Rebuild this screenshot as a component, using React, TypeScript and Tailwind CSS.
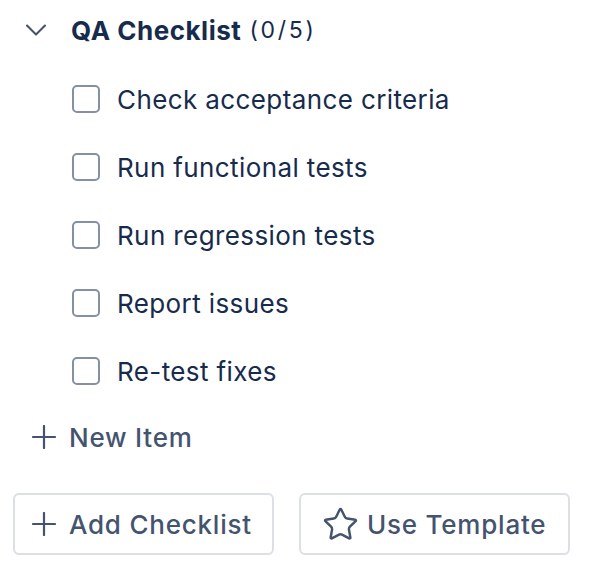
import { ChevronDown, Star } from "lucide-react";

const items = [
  "Check acceptance criteria",
  "Run functional tests",
  "Run regression tests",
  "Report issues",
  "Re-test fixes",
];

function PlusIcon() {
  return (
    <svg width="24" height="24" viewBox="0 0 24 24" fill="none" stroke="currentColor" strokeWidth="2.2" strokeLinecap="round">
      <path d="M12 1v22M1 12h22" />
    </svg>
  );
}

export default function App() {
  return (
    <div className="h-[568px] w-[592px] bg-white font-['Inter',sans-serif] text-[#172b4d]">
      {/* Header */}
      <div className="flex h-[60px] items-center">
        <div className="ml-[18px] flex w-[36px] justify-center text-[#44546f]">
          <ChevronDown size={36} strokeWidth={1.4} />
        </div>
        <h2 className="ml-[17px] text-[26px] font-bold tracking-[0.02em]">QA Checklist</h2>
        <span className="ml-[8px] text-[23px] tracking-[0.12em]">(0/5)</span>
      </div>

      {/* Items */}
      <ul className="mt-[5px]">
        {items.map((item) => (
          <li key={item} className="flex h-[68px] items-center pl-[72px]">
            <span className="h-[28px] w-[28px] rounded-[5px] border-2 border-[#8590a2] bg-white" />
            <span className="ml-[17px] text-[26px] tracking-[0.015em]">{item}</span>
          </li>
        ))}
      </ul>

      <button className="flex h-[64px] items-center pl-[32px] text-[26px] font-medium tracking-[0.03em] text-[#44546f]">
        <PlusIcon />
        <span className="ml-[13px]">New Item</span>
      </button>

      {/* Actions */}
      <div className="mt-[24px] flex gap-[25px] pl-[13px]">
        <button className="flex h-[62px] w-[261px] items-center rounded-[6px] border-2 border-[#dcdfe4] pl-[17px] text-[26px] font-medium tracking-[0.03em] text-[#44546f]">
          <PlusIcon />
          <span className="ml-[13px]">Add Checklist</span>
        </button>
        <button className="flex h-[62px] w-[271px] items-center rounded-[6px] border-2 border-[#dcdfe4] pl-[21px] text-[26px] font-medium tracking-[0.03em] text-[#44546f]">
          <Star size={37} strokeWidth={1.6} />
          <span className="ml-[8px]">Use Template</span>
        </button>
      </div>
    </div>
  );
}
